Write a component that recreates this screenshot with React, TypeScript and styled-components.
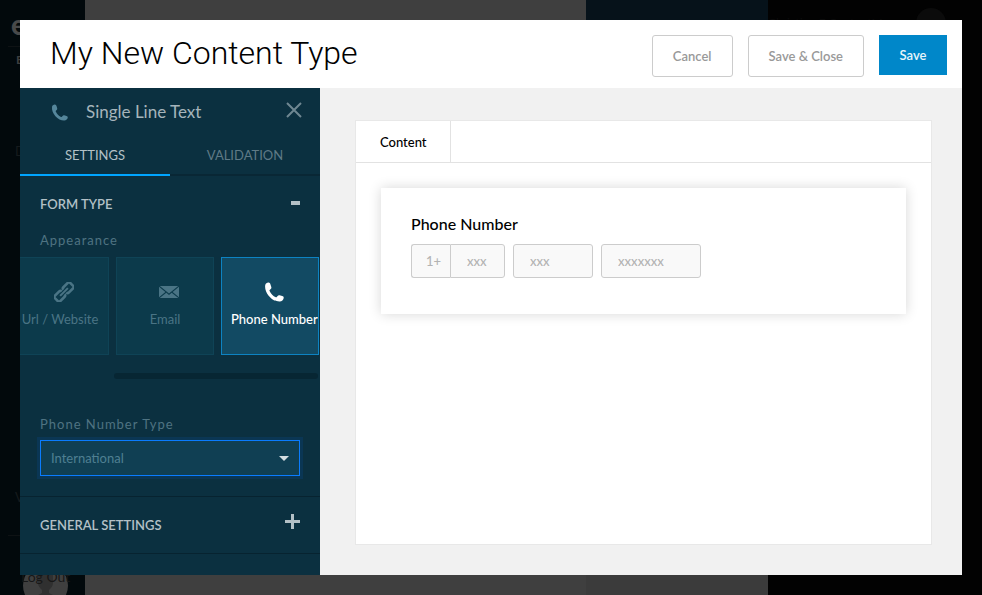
import React, { useState } from "react";
import styled, { createGlobalStyle, css } from "styled-components";

const GlobalStyle = createGlobalStyle`
  *, *::before, *::after { box-sizing: border-box; }
  html, body, #root { height: 100%; }
  body {
    margin: 0;
    overflow: hidden;
    background: #020202;
    font-family: Lato, "Liberation Sans", sans-serif;
    font-size: 13px;
    line-height: 20px;
  }
  button, input, select { font: inherit; margin: 0; }
  h1, h2, h3, p { margin: 0; font-weight: 400; }
`;

/* ---------- dimmed page behind the dialog ---------- */

const Backdrop = styled.div`
  display: flex;
  height: 100vh;
  overflow: hidden;
`;

const Rail = styled.nav`
  display: flex;
  flex-direction: column;
  flex: none;
  width: 85px;
  background: #02090c;
`;

const Brand = styled.div`
  margin-top: 8px;
  padding-left: 11px;
  font-size: 28px;
  font-weight: 900;
  line-height: 32px;
  color: #48494a;
`;

const RailTitle = styled.div`
  margin: 6px 0 72px 8px;
  padding: 4px 0 0 8px;
  border-top: 1px solid #0e1214;
  font-size: 12px;
  font-weight: 700;
  line-height: 18px;
  color: #3c3e3f;
`;

const RailItem = styled.div<{ $last?: boolean }>`
  margin-top: ${(p) => (p.$last ? "auto" : 0)};
  padding-left: 15px;
  color: #161b1d;
`;

const Account = styled.div`
  flex: none;
  height: 60px;
  margin: 28px 0 0 8px;
  padding: 27px 0 0 13px;
  border-top: 1px solid #0e1214;
  overflow: hidden;
`;

const Avatar = styled.div`
  display: grid;
  width: 45px;
  justify-items: center;

  > * { grid-area: 1 / 1; }
`;

const AvatarName = styled.span`
  margin-top: 4px;
  font-size: 14px;
  white-space: nowrap;
  color: #171717;
`;

const Main = styled.div`
  flex: 1 1 501px;
  background: #3f3f3f;
`;

const Detail = styled.div`
  flex: 0 0 182px;
  background: linear-gradient(#06121a 0 100px, #3b3b3b 100px);
`;

const Side = styled.div`
  flex: 0 0 214px;
  background: #020202;
`;

const SideUser = styled.div`
  display: flex;
  align-items: flex-start;
  justify-content: space-between;
  padding: 8px 36px 0 0;
  color: #0b0b0b;
`;

const SideName = styled.span`
  padding-top: 5px;
  font-size: 12px;
  white-space: nowrap;
`;

const SideAvatar = styled.span`
  flex: none;
  width: 30px;
  height: 30px;
  border-radius: 50%;
  background: #0b0b0b;
`;

/* ---------- dialog ---------- */

const Dialog = styled.section`
  position: fixed;
  inset: 20px;
  display: flex;
  flex-direction: column;
  background: #fff;
`;

const Header = styled.header`
  display: flex;
  align-items: flex-start;
  gap: 15px;
  flex: none;
  height: 68px;
  padding: 15px 15px 0 30px;
`;

const Title = styled.h1`
  flex: 1;
  font-family: Roboto, Lato, sans-serif;
  font-size: 32px;
  font-weight: 300;
  line-height: 36px;
  white-space: nowrap;
  color: #000;
`;

const Action = styled.button<{ $primary?: boolean }>`
  min-width: 68px;
  height: 42px;
  padding: 0 20px;
  border: 1px solid #ccc;
  border-radius: 3px;
  background: #fff;
  color: #999;
  font-weight: 600;
  white-space: nowrap;

  ${(p) => p.$primary && css`
    height: 40px;
    border: 0;
    border-radius: 0;
    background: #0087c9;
    color: #e8f5fb;
  `}
`;

const Body = styled.div`
  display: flex;
  flex: 1;
  min-height: 0;
`;

const Settings = styled.aside`
  flex: none;
  width: 300px;
  overflow: hidden;
  background: #0b3040;
  color: #b3c0c6;
`;

const FieldHead = styled.div`
  display: flex;
  align-items: center;
  height: 48px;
  padding: 0 18px 0 31px;
  color: #55869b;
`;

const FieldName = styled.h2`
  flex: 1;
  margin-left: 18px;
  font-size: 17px;
  color: #a5b4bb;
`;

const CloseButton = styled.button`
  display: flex;
  align-self: flex-start;
  margin-top: 14px;
  padding: 0;
  border: 0;
  background: none;
  color: #6f8792;
`;

const Tabs = styled.div`
  display: flex;
`;

const Tab = styled.button<{ $active: boolean }>`
  flex: 1;
  height: 40px;
  padding: 0;
  border: 0;
  border-bottom: 2px solid ${(p) => (p.$active ? "#00a5ff" : "#092735")};
  background: none;
  color: ${(p) => (p.$active ? "#b3c0c6" : "#5f7a86")};
`;

const Section = styled.section`
  padding: 0 20px;
  border-bottom: 1px solid #072330;
`;

const SectionHead = styled.button`
  display: flex;
  align-items: center;
  justify-content: space-between;
  width: 100%;
  height: 56px;
  padding: 0;
  border: 0;
  background: none;
  color: #b3c0c6;
  font-weight: 600;
`;

const FieldLabel = styled.label`
  display: block;
  letter-spacing: 1px;
  line-height: 16px;
  color: #4f7382;
`;

const Tiles = styled.div`
  display: flex;
  justify-content: flex-end;
  gap: 7px;
  margin: 9px -20px 0;
  padding-right: 1px;
  overflow: hidden;
`;

const Tile = styled.button<{ $active?: boolean }>`
  display: flex;
  flex: none;
  flex-direction: column;
  align-items: safe center;
  width: 98px;
  height: 98px;
  padding: 24px 9px 0;
  border: 1px solid #0f4356;
  background: #0c3a4b;
  color: #4a7485;
  white-space: nowrap;
  overflow: hidden;

  svg { margin-left: 8px; }
  span { margin-top: 7px; }

  ${(p) => p.$active && css`
    border-color: #0d83c2;
    background: #124a63;
    color: #fff;
    font-weight: 500;
  `}
`;

const ScrollTrack = styled.div`
  display: flex;
  justify-content: flex-end;
  margin: 18px -18px 37px;
`;

const ScrollThumb = styled.div`
  width: 204px;
  height: 6px;
  border-radius: 3px;
  background: #072633;
`;

const SelectBox = styled.div`
  display: grid;
  align-items: center;
  margin: 8px 0 20px;

  > * { grid-area: 1 / 1; }
  svg { justify-self: end; margin-right: 11px; pointer-events: none; }
`;

const Select = styled.select`
  width: 100%;
  height: 36px;
  padding: 0 10px;
  border: 1px solid #0a7cff;
  border-radius: 0;
  outline: 0;
  box-shadow: 0 0 0 3px #0a3654;
  appearance: none;
  background: #103f53;
  color: #4f7f92;
`;

const Canvas = styled.main`
  display: flex;
  flex: 1;
  min-width: 0;
  padding: 32px 30px 30px 35px;
  background: #f1f1f1;
`;

const Sheet = styled.div`
  flex: 1;
  min-width: 0;
  border: 1px solid #e8e8e8;
  background: #fff;
`;

const SheetTabs = styled.div`
  display: flex;
  border-bottom: 1px solid #e2e2e2;
`;

const SheetTab = styled.button`
  height: 41px;
  padding: 0 23px 0 24px;
  border: 0;
  border-right: 1px solid #e2e2e2;
  background: #fff;
  color: #000;
  font-weight: 500;
`;

const Card = styled.div`
  margin: 25px;
  padding: 26px 30px 36px;
  background: #fff;
  box-shadow: 0 0 12px rgba(0, 0, 0, 0.16);
`;

const CardTitle = styled.h3`
  font-size: 16px;
  font-weight: 500;
  color: #000;
`;

const PhoneRow = styled.div`
  display: flex;
  gap: 8px;
  margin-top: 10px;
`;

const PhoneGroup = styled.div`
  display: flex;
`;

const PhoneInput = styled.input<{ $w: number; $join?: "left" | "right" }>`
  width: ${(p) => p.$w}px;
  height: 34px;
  padding: 0 0 0 ${(p) => (p.$join === "left" ? 14 : 16)}px;
  border: 1px solid #ccc;
  border-radius: 3px;
  background: #f9f9f9;
  font-weight: 500;

  &::placeholder { color: #b3b3b3; opacity: 1; }

  ${(p) => p.$join === "left" && css`border-right: 0; border-radius: 3px 0 0 3px;`}
  ${(p) => p.$join === "right" && css`border-radius: 0 3px 3px 0;`}
`;

/* ---------- icons ---------- */

const PhoneIcon = ({ size }: { size: number }) => (
  <svg width={size} height={size} viewBox="0 0 20 20" fill="currentColor" aria-hidden="true">
    <path d="M1.200 3.200C1.500 1.500 3.100.4 4.600.5c1 .1 1.500.8 1.800 1.700l.9 2.900c.2.8 0 1.400-.6 1.900l-1 .9c-.3.3-.3.6-.1 1 1.400 3 3.400 5 6.200 6.300.5.2.8.1 1-.2l.8-1c.5-.7 1.200-.9 2-.7l2.600.8c1 .3 1.600.9 1.500 1.900-.2 1.900-1.900 3.400-4 3.500C8.600 19.800.1 11.300 1.200 3.200Z" />
  </svg>
);

const LinkIcon = () => (
  <svg width="20" height="20" viewBox="0 0 20 20" fill="none" stroke="currentColor" aria-hidden="true">
    <g transform="rotate(-45 10 10)" strokeWidth="2.600">
      <path d="M8.700 12v.2a1.600 1.600 0 0 1-1.600 1.600H.8A1.600 1.600 0 0 1-.8 12.200V7.800A1.600 1.600 0 0 1 .8 6.200h6.300a1.600 1.600 0 0 1 1.600 1.600V8" />
      <path d="M11.300 8v-.2a1.600 1.600 0 0 1 1.600-1.600h6.300a1.600 1.600 0 0 1 1.600 1.600v4.400a1.600 1.600 0 0 1-1.600 1.600h-6.300a1.600 1.600 0 0 1-1.600-1.600V12" />
      <path d="M4.500 10h11" strokeWidth="2" />
    </g>
  </svg>
);

const MailIcon = () => (
  <svg width="20" height="20" viewBox="0 0 20 20" fill="currentColor" aria-hidden="true">
    <path d="M.8 4h18.400L10 11.600ZM0 4.800 6.400 10 0 15.300ZM20 4.800v10.500L13.600 10ZM7.300 10.700 10 13l2.700-2.300L19.300 16H.7Z" />
  </svg>
);

const CloseIcon = () => (
  <svg width="16" height="16" viewBox="0 0 16 16" fill="none" stroke="currentColor" strokeWidth="2" aria-hidden="true">
    <path d="M1 1l14 14M15 1L1 15" />
  </svg>
);

const MinusIcon = () => (
  <svg width="10" height="6" viewBox="0 0 10 6" fill="currentColor" aria-hidden="true">
    <path d="M1 0h9v4H1z" />
  </svg>
);

const PlusIcon = () => (
  <svg width="15" height="22" viewBox="0 0 15 22" fill="currentColor" aria-hidden="true">
    <path d="M6 0h3v6h6v3H9v6H6V9H0V6h6z" />
  </svg>
);

const CaretIcon = () => (
  <svg width="10" height="5" viewBox="0 0 10 5" fill="#d3dde1" aria-hidden="true">
    <path d="M0 0h10L5 5z" />
  </svg>
);

const PersonIcon = () => (
  <svg width="45" height="45" viewBox="0 0 45 45" aria-hidden="true">
    <circle cx="22.500" cy="22.500" r="22.500" fill="#3f3f3f" />
    <path d="M15 8h15v12c0 3-2 5-4 7v3l12 6v9H7v-9l12-6v-3c-2-2-4-4-4-7z" fill="#303030" />
  </svg>
);

const TAB_NAMES = ["SETTINGS", "VALIDATION"];

export default function App() {
  const [tab, setTab] = useState(TAB_NAMES[0]);

  return (
    <>
      <GlobalStyle />
      <Backdrop aria-hidden="true">
        <Rail>
          <Brand>e</Brand>
          <RailTitle>E</RailTitle>
          <RailItem>D</RailItem>
          <RailItem $last>V</RailItem>
          <Account>
            <Avatar>
              <PersonIcon />
              <AvatarName>Log Out</AvatarName>
            </Avatar>
          </Account>
        </Rail>
        <Main />
        <Detail />
        <Side>
          <SideUser>
            <SideName>Christine E ContentMan</SideName>
            <SideAvatar />
          </SideUser>
        </Side>
      </Backdrop>

      <Dialog role="dialog" aria-labelledby="dialog-title">
        <Header>
          <Title id="dialog-title">My New Content Type</Title>
          <Action type="button">Cancel</Action>
          <Action type="button">Save &amp; Close</Action>
          <Action type="button" $primary>Save</Action>
        </Header>

        <Body>
          <Settings>
            <FieldHead>
              <PhoneIcon size={17} />
              <FieldName>Single Line Text</FieldName>
              <CloseButton type="button" aria-label="Close"><CloseIcon /></CloseButton>
            </FieldHead>
            <Tabs role="tablist">
              {TAB_NAMES.map((name) => (
                <Tab key={name} type="button" role="tab" aria-selected={tab === name} $active={tab === name} onClick={() => setTab(name)}>
                  {name}
                </Tab>
              ))}
            </Tabs>

            <Section>
              <SectionHead type="button" aria-expanded="true">FORM TYPE <MinusIcon /></SectionHead>
              <FieldLabel as="p">Appearance</FieldLabel>
              <Tiles>
                <Tile type="button"><LinkIcon /><span>Url / Website</span></Tile>
                <Tile type="button"><MailIcon /><span>Email</span></Tile>
                <Tile type="button" $active aria-pressed="true"><PhoneIcon size={20} /><span>Phone Number</span></Tile>
              </Tiles>
              <ScrollTrack><ScrollThumb /></ScrollTrack>
              <FieldLabel htmlFor="phone-type">Phone Number Type</FieldLabel>
              <SelectBox>
                <Select id="phone-type" defaultValue="International">
                  <option>International</option>
                </Select>
                <CaretIcon />
              </SelectBox>
            </Section>

            <Section>
              <SectionHead type="button" aria-expanded="false">GENERAL SETTINGS <PlusIcon /></SectionHead>
            </Section>
          </Settings>

          <Canvas>
            <Sheet>
              <SheetTabs>
                <SheetTab type="button">Content</SheetTab>
              </SheetTabs>
              <Card>
                <CardTitle>Phone Number</CardTitle>
                <PhoneRow>
                  <PhoneGroup>
                    <PhoneInput $w={39} $join="left" placeholder="1+" aria-label="Country code" />
                    <PhoneInput $w={55} $join="right" placeholder="xxx" aria-label="Area code" />
                  </PhoneGroup>
                  <PhoneInput $w={80} placeholder="xxx" aria-label="Prefix" />
                  <PhoneInput $w={100} placeholder="xxxxxxx" aria-label="Line number" />
                </PhoneRow>
              </Card>
            </Sheet>
          </Canvas>
        </Body>
      </Dialog>
    </>
  );
}
